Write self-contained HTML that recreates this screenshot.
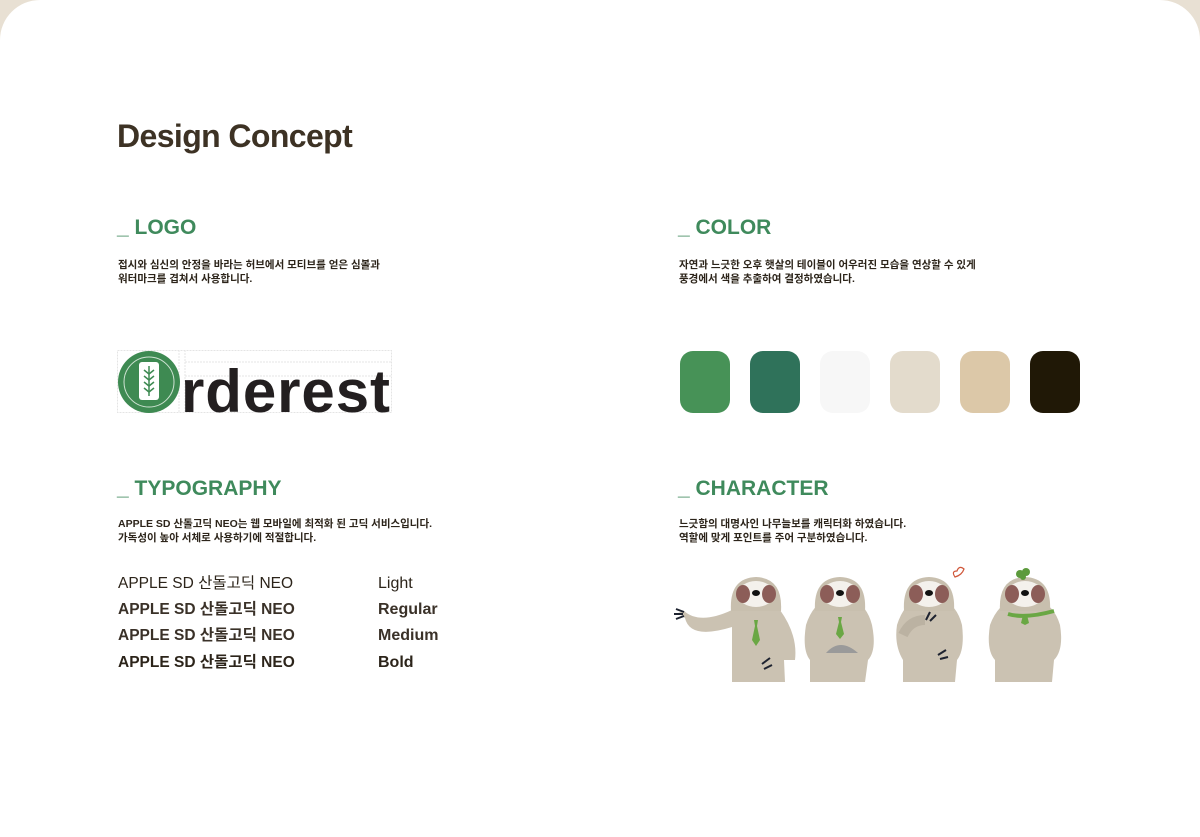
<!DOCTYPE html>
<html><head><meta charset="utf-8"><style>
*{margin:0;padding:0;box-sizing:border-box}
body{width:1200px;height:837px;background:#e8e0d3;position:relative;overflow:hidden;font-family:"Liberation Sans","Noto Sans CJK KR",sans-serif}
.card{position:absolute;left:0;top:0;width:1200px;height:837px;background:#fff;border-radius:40px 40px 0 0}
.a{position:absolute;white-space:nowrap}
h1{position:absolute;left:117px;top:116px;font-size:32px;line-height:40px;font-weight:bold;color:#3d3224;letter-spacing:-0.6px}
.h{position:absolute;font-size:21px;line-height:26px;font-weight:bold;color:#3f8a5c}
.p{position:absolute;font-size:10.5px;font-weight:bold;color:#2c241a;line-height:14px}
.sw{position:absolute;top:351px;width:50px;height:62px;border-radius:13px}
.t{position:absolute;left:118px;font-size:15.5px;line-height:18px;color:#2c241a}
.w{position:absolute;left:378px;font-size:16px;line-height:18px;color:#2c241a}
</style></head><body>
<div class="card"></div>
<h1>Design Concept</h1>
<div class="h" style="left:117px;top:215px">_ LOGO</div>
<div class="p" style="left:118px;top:258px">접시와 심신의 안정을 바라는 허브에서 모티브를 얻은 심볼과<br>워터마크를 겹쳐서 사용합니다.</div>
<div class="h" style="left:678px;top:215px">_ COLOR</div>
<div class="p" style="left:679px;top:258px">자연과 느긋한 오후 햇살의 테이블이 어우러진 모습을 연상할 수 있게<br>풍경에서 색을 추출하여 결정하였습니다.</div>
<div class="h" style="left:117px;top:476px">_ TYPOGRAPHY</div>
<div class="p" style="left:118px;top:517px">APPLE SD 산돌고딕 NEO는 웹 모바일에 최적화 된 고딕 서비스입니다.<br>가독성이 높아 서체로 사용하기에 적절합니다.</div>
<div class="h" style="left:678px;top:476px">_ CHARACTER</div>
<div class="p" style="left:679px;top:517px">느긋함의 대명사인 나무늘보를 캐릭터화 하였습니다.<br>역할에 맞게 포인트를 주어 구분하였습니다.</div>

<!-- logo -->
<svg class="a" style="left:117px;top:350px" width="276" height="64" viewBox="0 0 276 64">
<g stroke="#e4e4e4" stroke-width="1" stroke-dasharray="2 1" fill="none">
<rect x="0.5" y="0.5" width="274" height="62"/><line x1="62" y1="0" x2="62" y2="63"/><line x1="68" y1="0" x2="68" y2="63"/><line x1="68" y1="12" x2="275" y2="12"/><line x1="68" y1="26" x2="275" y2="26"/>
</g>
<circle cx="32" cy="32" r="31" fill="#3e8a52"/>
<circle cx="32" cy="32" r="25" fill="none" stroke="#cfe3d3" stroke-width="1"/>
<rect x="22" y="12" width="20" height="38" rx="3" fill="#fff"/>
<g stroke="#3e8a52" stroke-width="1.5" fill="none"><line x1="32" y1="16" x2="32" y2="46"/><path d="M27 20l5 4 5-4M27 26l5 4 5-4M27 32l5 4 5-4M27 38l5 4 5-4"/></g>
<text x="64" y="62" font-family="Liberation Sans,sans-serif" font-size="60" font-weight="bold" fill="#231f20" letter-spacing="-1" textLength="208">rderest</text>
</svg>

<div class="sw" style="left:680px;background:#479257"></div>
<div class="sw" style="left:750px;background:#2f725a"></div>
<div class="sw" style="left:820px;background:#f7f7f7"></div>
<div class="sw" style="left:890px;background:#e3dbcc"></div>
<div class="sw" style="left:960px;background:#dcc8a8"></div>
<div class="sw" style="left:1030px;background:#201806"></div>

<div class="t" style="top:575px;font-weight:normal">APPLE SD 산돌고딕 NEO</div>
<div class="t" style="top:601px;font-weight:bold;color:#3a3128">APPLE SD 산돌고딕 NEO</div>
<div class="t" style="top:627px;font-weight:bold;color:#3a3128">APPLE SD 산돌고딕 NEO</div>
<div class="t" style="top:654px;font-weight:bold">APPLE SD 산돌고딕 NEO</div>
<div class="w" style="top:575px">Light</div>
<div class="w" style="top:601px;font-weight:bold;color:#3a3128">Regular</div>
<div class="w" style="top:627px;font-weight:bold;color:#3a3128">Medium</div>
<div class="w" style="top:654px;font-weight:bold">Bold</div>

<!-- sloths -->
<svg class="a" style="left:670px;top:565px" width="420" height="120" viewBox="0 0 420 120">
<defs>
<g id="head"><path d="M-25 32 Q-27 -1 0 -2 Q27 -1 25 32 Z" fill="#c8bfae"/>
<ellipse cx="0" cy="15" rx="18" ry="13" fill="#f4f1ec"/>
<ellipse cx="-13" cy="15" rx="7" ry="9" fill="#8c5d58"/><ellipse cx="13" cy="15" rx="7" ry="9" fill="#8c5d58"/>
<ellipse cx="0" cy="14" rx="4" ry="3" fill="#111"/></g>
</defs>
<!-- 1 -->
<path d="M62 117 L62 62 Q20 75 15 53 L8 48 L14 46 Q30 60 62 45 Q72 28 80 28 Q100 28 110 45 Q128 70 125 95 L114 95 L115 117 Z" fill="#cbc2b2"/>
<use href="#head" x="86" y="14"/>
<path d="M84 55 l4 0 -1 6 3 14 -4 6 -4 -6 3 -14z" fill="#6aa744"/>
<path d="M6 44 l8 3 M4 49 l9 0 M6 54 l8-3" stroke="#1e2330" stroke-width="2"/>
<path d="M92 99 l8 -6 M94 104 l8-4" stroke="#1e2330" stroke-width="2"/>
<!-- 2 -->
<path d="M140 117 L140 95 Q132 85 136 60 Q143 38 158 35 L182 35 Q197 40 202 60 Q207 85 198 95 L195 117 Z" fill="#cbc2b2"/>
<use href="#head" x="170" y="14"/>
<path d="M168 52 l4 0 -1 5 3 12 -4 5 -4 -5 3 -12z" fill="#6aa744"/>
<path d="M156 88 Q170 72 188 88 Z" fill="#9a9a9a"/>
<!-- 3 -->
<path d="M233 117 L233 95 Q224 80 227 60 Q234 38 248 35 L272 35 Q287 40 292 60 Q295 85 287 95 L285 117 Z" fill="#cbc2b2"/>
<use href="#head" x="259" y="14"/>
<path d="M233 70 Q240 55 255 55" stroke="#bbb2a2" stroke-width="10" fill="none"/>
<path d="M256 55 l4 -8 M260 56 l6 -6" stroke="#1e2330" stroke-width="2"/>
<path d="M268 90 l8-5 M270 94 l8-2" stroke="#1e2330" stroke-width="2"/>
<path d="M285 12 q-4 -6 2 -6 q2 -6 7 -2 q-2 6 -9 8z" fill="none" stroke="#d0573a" stroke-width="1.2"/>
<!-- 4 -->
<path d="M325 117 L325 95 Q316 85 320 60 Q328 38 345 35 L368 35 Q384 40 390 60 Q394 85 384 95 L382 117 Z" fill="#cbc2b2"/>
<use href="#head" x="355" y="14"/>
<path d="M338 49 Q355 54 384 46" stroke="#6aa744" stroke-width="4" fill="none"/>
<path d="M353 50 l4 0 2 8 -4 2 -4 -2z" fill="#6aa744"/>
<circle cx="350" cy="9" r="4" fill="#5c9a3c"/><circle cx="356" cy="7" r="4" fill="#5c9a3c"/><circle cx="353" cy="12" r="3" fill="#5c9a3c"/>
</svg>
</body></html>
